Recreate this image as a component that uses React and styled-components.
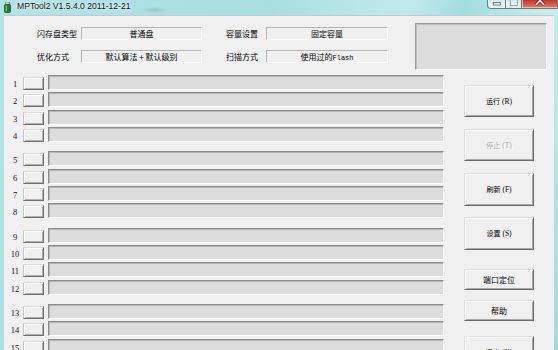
import React from "react";
import styled, { createGlobalStyle } from "styled-components";

const Global = createGlobalStyle`
  html, body { margin: 0; padding: 0; width: 558px; height: 350px; overflow: hidden; background: #a5dde0; }
  #root { width: 558px; height: 350px; }
  * { box-sizing: border-box; }
`;

const Win = styled.div`
  width: 558px;
  height: 350px;
  display: flex;
  flex-direction: column;
  overflow: hidden;
  background:
    radial-gradient(ellipse 14px 3px at 155px 10px, rgba(110, 140, 145, 0.35), transparent),
    linear-gradient(110deg, #b3e3e6 0%, #a9dee1 40%, #c2eaec 60%, #a4dcdf 68%, #c8edef 80%, #a0d9dd 100%);
`;

const TitleBar = styled.div`
  height: 15px;
  flex: none;
  display: flex;
  align-items: flex-start;
  padding-left: 4px;
`;

const TitleText = styled.span`
  margin-left: 6px;
  margin-top: 1px;
  font: 8.6px/11px "Liberation Sans", Arial, sans-serif;
  color: #111;
  text-shadow: 0 0 5px rgba(255, 255, 255, 0.95), 0 0 2px rgba(255, 255, 255, 0.9);
`;

const Controls = styled.div`
  margin-left: auto;
  display: flex;
  height: 9px;
`;

const Ctl = styled.div`
  width: ${(p) => p.$w}px;
  height: 9px;
  display: flex;
  justify-content: center;
  align-items: flex-end;
  border: 1px solid #5f7f88;
  border-top: none;
  border-left: ${(p) => (p.$first ? "1px solid #5f7f88" : "none")};
  border-radius: ${(p) => (p.$first ? "0 0 0 4px" : "0")};
  background: ${(p) =>
    p.$close
      ? "linear-gradient(#b83a2e, #d4604f 60%, #e07a66)"
      : "linear-gradient(#d2e7ea, #e6f3f4 60%, #d6eaec)"};
  box-shadow: inset 1px 0 0 rgba(255, 255, 255, 0.55), inset 0 -1px 0 rgba(255, 255, 255, 0.5);
`;

const Client = styled.div`
  flex: 1;
  margin: 0 4px;
  background: #f0f0f0;
  border-top: 1px solid #b7cdd0;
  display: flex;
  flex-direction: column;
  overflow: hidden;
`;

const Header = styled.div`
  display: flex;
  align-items: flex-start;
  flex: none;
`;

const InfoGrid = styled.div`
  margin-top: 11px;
  margin-left: 33px;
  display: grid;
  grid-template-columns: 44px 121px 64px 122px;
  grid-template-rows: 13px 13px;
  row-gap: 10px;
  align-items: center;
`;

const Label = styled.span`
  padding-left: ${(p) => p.$indent || 0}px;
  font: 8px/13px "Noto Sans CJK SC", sans-serif;
  color: #000;
  white-space: nowrap;
`;

const Field = styled.div`
  height: 13px;
  border: 1px solid;
  border-color: #b4b4b4 #ffffff #ffffff #b4b4b4;
  background: #f0f0f0;
  text-align: center;
  font: 8px/11px "Noto Sans CJK SC", sans-serif;
  color: #000;
  white-space: nowrap;
`;

const Latin = styled.span`
  font: 7px/11px "Liberation Mono", "DejaVu Sans Mono", monospace;
`;

const InfoBox = styled.div`
  margin-top: 7px;
  margin-left: 27px;
  width: 132px;
  height: 47px;
  background: #dcdcdc;
  border: 1px solid;
  border-color: #9c9c9c #ffffff #ffffff #9c9c9c;
  box-shadow: inset 1px 1px 0 #bdbdbd;
`;

const Main = styled.div`
  margin-top: 5px;
  display: flex;
  align-items: flex-start;
`;

const RowsCol = styled.div`
  display: flex;
  flex-direction: column;
  gap: 9.33px;
`;

const Group = styled.div`
  display: flex;
  flex-direction: column;
  gap: 2.33px;
`;

const Row = styled.div`
  display: flex;
  align-items: flex-start;
  height: 15px;
`;

const Num = styled.span`
  width: 12px;
  margin-left: 5px;
  margin-top: 3px;
  text-align: center;
  font: 8.5px/13px "Liberation Serif", "DejaVu Serif", serif;
  color: #111;
`;

const PortButton = styled.div`
  width: 21px;
  height: 13px;
  margin-top: 2px;
  margin-left: 2px;
  background: #f0f0f0;
  border: 1px solid;
  border-color: #dadada #6f6f6f #6f6f6f #c4c4c4;
  box-shadow: inset 1px 1px 0 #ffffff, inset -1px -1px 0 #b0b0b0;
`;

const Bar = styled.div`
  width: 396px;
  height: 15px;
  margin-left: 4px;
  background: #dcdcdc;
  border: 1px solid;
  border-color: #8a8a8a #ffffff #ffffff #8a8a8a;
  box-shadow: inset 1px 1px 0 #b5b5b5;
`;

const SideCol = styled.div`
  margin-left: 20px;
  width: 70px;
  display: flex;
  flex-direction: column;
`;

const SideButton = styled.div`
  width: 70px;
  height: ${(p) => p.$h}px;
  margin-top: ${(p) => p.$mt}px;
  flex: none;
  background: #f0f0f0;
  border: 1px solid;
  border-color: #e0e0e0 #6a6a6a #6a6a6a #e0e0e0;
  box-shadow: inset 1px 1px 0 #ffffff, inset -1px -1px 0 #a8a8a8;
  display: flex;
  align-items: center;
  justify-content: center;
  color: ${(p) => (p.$disabled ? "#a6a6a6" : "#000")};
  text-shadow: ${(p) => (p.$disabled ? "1px 1px 0 #ffffff" : "none")};
  white-space: nowrap;
`;

const Caption = styled.span`
  font: ${(p) => (p.$small ? 7 : 8)}px/12px "Noto Sans CJK SC", sans-serif;
`;

const Key = styled.span`
  margin-left: 2px;
  font: 7.5px/12px "Liberation Serif", "DejaVu Serif", serif;
`;

const groups = [
  [1, 2, 3, 4],
  [5, 6, 7, 8],
  [9, 10, 11, 12],
  [13, 14, 15, 16],
];

const sideButtons = [
  { t: "运行", k: "(R)", h: 32, mt: 10, small: true },
  { t: "停止", k: "(T)", h: 32, mt: 12, small: true, disabled: true },
  { t: "刷新", k: "(F)", h: 33, mt: 12, small: true },
  { t: "设置", k: "(S)", h: 33, mt: 11, small: true },
  { t: "端口定位", h: 21, mt: 19 },
  { t: "帮助", h: 21, mt: 10 },
  { t: "退出", k: "(X)", h: 32, mt: 15, small: true },
];

function AppIcon() {
  return (
    <svg width="7" height="11" viewBox="0 0 7 11" style={{ marginTop: 2, flex: "none" }}>
      <rect x="1.5" y="0" width="4" height="3" fill="#d8e8d8" stroke="#4a6a4a" strokeWidth="0.6" />
      <rect x="0.5" y="2.5" width="6" height="8" rx="1" fill="#2f7a3a" stroke="#1c4a22" strokeWidth="0.8" />
      <rect x="1.6" y="3.6" width="1.4" height="5.5" fill="#6fc07a" />
    </svg>
  );
}

export default function App() {
  return (
    <>
      <Global />
      <Win>
        <TitleBar>
          <AppIcon />
          <TitleText>MPTool2 V1.5.4.0 2011-12-21</TitleText>
          <Controls>
            <Ctl $w={19} $first>
              <svg width="8" height="4" viewBox="0 0 8 4" style={{ marginBottom: 2 }}>
                <rect x="0.5" y="0.5" width="7" height="2.5" fill="#ffffff" stroke="#4d6870" strokeWidth="0.8" />
              </svg>
            </Ctl>
            <Ctl $w={16}>
              <svg width="8" height="6" viewBox="0 0 8 6" style={{ marginBottom: 2 }}>
                <rect x="0.5" y="-2" width="7" height="7.5" fill="none" stroke="#ffffff" strokeWidth="1.6" />
                <rect x="0.5" y="-2" width="7" height="7.5" fill="none" stroke="#4d6870" strokeWidth="0.6" />
              </svg>
            </Ctl>
            <Ctl $w={36} $close>
              <svg width="10" height="6" viewBox="0 0 10 6" style={{ marginBottom: 2 }}>
                <path d="M1 -4 L9 5 M9 -4 L1 5" stroke="#6b1a12" strokeWidth="3" />
                <path d="M1 -4 L9 5 M9 -4 L1 5" stroke="#ffffff" strokeWidth="1.6" />
              </svg>
            </Ctl>
          </Controls>
        </TitleBar>
        <Client>
          <Header>
            <InfoGrid>
              <Label>闪存盘类型</Label>
              <Field>普通盘</Field>
              <Label $indent={24}>容量设置</Label>
              <Field>固定容量</Field>
              <Label>优化方式</Label>
              <Field>默认算法 + 默认级别</Field>
              <Label $indent={24}>扫描方式</Label>
              <Field>
                使用过的<Latin>Flash</Latin>
              </Field>
            </InfoGrid>
            <InfoBox />
          </Header>
          <Main>
            <RowsCol>
              {groups.map((g, gi) => (
                <Group key={gi}>
                  {g.map((n) => (
                    <Row key={n}>
                      <Num>{n}</Num>
                      <PortButton />
                      <Bar />
                    </Row>
                  ))}
                </Group>
              ))}
            </RowsCol>
            <SideCol>
              {sideButtons.map((b) => (
                <SideButton key={b.t} $h={b.h} $mt={b.mt} $disabled={b.disabled}>
                  <Caption $small={b.small}>
                    {b.t}
                    {b.k && <Key>{b.k}</Key>}
                  </Caption>
                </SideButton>
              ))}
            </SideCol>
          </Main>
        </Client>
      </Win>
    </>
  );
}
